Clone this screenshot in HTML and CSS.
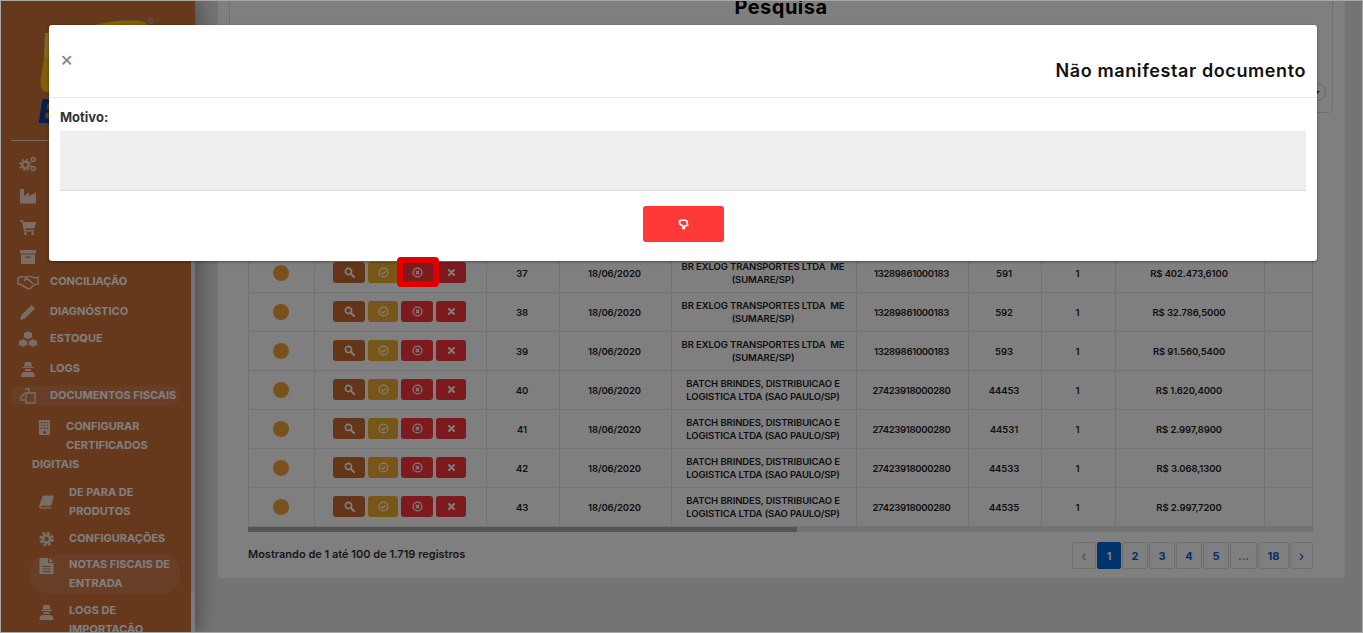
FILE: index.html
```html
<!DOCTYPE html>
<html>

<head>
    <meta charset="utf-8">
    <title>Notas fiscais de entrada</title>
    <link rel="stylesheet" href="styles.css">
</head>

<body>
    <svg class="icon-defs" xmlns="http://www.w3.org/2000/svg">
        <symbol id="i-search" viewBox="0 0 16 16"><circle cx="6.5" cy="6.5" r="4.5" fill="none" stroke="currentColor" stroke-width="2.4"/><path d="M10 10l4.5 4.5" stroke="currentColor" stroke-width="3" stroke-linecap="round"/></symbol>
        <symbol id="i-check" viewBox="0 0 16 16"><circle cx="8" cy="8" r="6.5" fill="none" stroke="currentColor" stroke-width="1.8"/><path d="M4.8 8l2.4 2.4 4-4" fill="none" stroke="currentColor" stroke-width="1.8"/></symbol>
        <symbol id="i-cancel" viewBox="0 0 16 16"><circle cx="8" cy="8" r="6.5" fill="none" stroke="currentColor" stroke-width="1.8"/><path d="M5.5 5.5l5 5M10.5 5.5l-5 5" stroke="currentColor" stroke-width="2"/></symbol>
        <symbol id="i-times" viewBox="0 0 16 16"><path d="M3.5 3.5l9 9M12.5 3.5l-9 9" stroke="currentColor" stroke-width="3.6" stroke-linecap="round"/></symbol>
        <symbol id="i-gears" viewBox="0 0 20 18"><circle cx="7" cy="10" r="3.6" fill="none" stroke="currentColor" stroke-width="2.6"/><circle cx="7" cy="10" r="6" fill="none" stroke="currentColor" stroke-width="2" stroke-dasharray="2.4 2.3"/><circle cx="16" cy="4" r="2.2" fill="none" stroke="currentColor" stroke-width="1.8"/><circle cx="16" cy="14" r="2.2" fill="none" stroke="currentColor" stroke-width="1.8"/></symbol>
        <symbol id="i-industry" viewBox="0 0 16 16"><path d="M0 1h4v7l5-3.500V8l7-3.500V15.500H0z" fill="currentColor"/></symbol>
        <symbol id="i-cart" viewBox="0 0 16 16"><path d="M0 1h3l.6 2H16l-1.500 6.500H5l.4 1.500H14v1.500H4L2 2.500H0z" fill="currentColor"/><circle cx="5.500" cy="14.500" r="1.500" fill="currentColor"/><circle cx="12.500" cy="14.500" r="1.500" fill="currentColor"/></symbol>
        <symbol id="i-archive" viewBox="0 0 16 16"><path d="M0 1h16v3.500H0zM1 5.500h14V15H1zM5.500 7.500v1.200h5V7.500z" fill="currentColor" fill-rule="evenodd"/></symbol>
        <symbol id="i-handshake" viewBox="0 0 22 14"><path d="M1 3l4-1.500 4 1 2-1 3 0 4 1.500 3-1v7l-3 .5-5 4-2 .5-3-2-4-2.500-3-.5zM7 6l2-2.500 3 1.500 4 4" fill="none" stroke="currentColor" stroke-width="1.600"/></symbol>
        <symbol id="i-pencil" viewBox="0 0 16 16"><path d="M11.500 1l3.500 3.500L5 14.500 0 16l1.500-5z" fill="currentColor"/></symbol>
        <symbol id="i-cubes" viewBox="0 0 20 16"><path d="M10 0l4.500 2v4.500L10 8.500 5.500 6.500V2zM5 8l4.500 2v4L5 16 .5 14v-4zM15 8l4.500 2v4L15 16l-4.500-2v-4z" fill="currentColor" stroke="#cc7038" stroke-width=".6"/></symbol>
        <symbol id="i-secret" viewBox="0 0 14 16"><path d="M4 1h6l1 4.500H3zM1.500 6h11v1h-11zM4 8h6v2H4zM0 16c0-3 1-5 4-5h6c3 0 4 2 4 5z" fill="currentColor"/></symbol>
        <symbol id="i-copy" viewBox="0 0 16 16"><path d="M5 1h4v4H5L1 9v3h4M6 5h9v10H6z" fill="none" stroke="currentColor" stroke-width="1.300"/></symbol>
        <symbol id="i-building" viewBox="0 0 12 16"><path d="M0 0h12v16H0zM2 2v1.500h1.500V2zM5 2v1.500h2V2zM8.500 2v1.500H10V2zM2 5v1.500h1.500V5zM5 5v1.500h2V5zM8.500 5v1.500H10V5zM2 8v1.500h1.500V8zM5 8v1.500h2V8zM8.500 8v1.500H10V8zM4.500 12v2.500h3V12z" fill="currentColor" fill-rule="evenodd"/></symbol>
        <symbol id="i-book" viewBox="0 0 16 14"><path d="M4 0h12l-3 11H2.500c-.8 0-1 1.500 0 1.500H13V14H2c-2 0-2-2-1.500-3.500z" fill="currentColor"/></symbol>
        <symbol id="i-cog" viewBox="0 0 16 16"><circle cx="8" cy="8" r="3.800" fill="none" stroke="currentColor" stroke-width="3"/><circle cx="8" cy="8" r="6.500" fill="none" stroke="currentColor" stroke-width="2.600" stroke-dasharray="3 2.100"/></symbol>
        <symbol id="i-file" viewBox="0 0 14 16"><path d="M0 0h8.500v5H14v11H0zM9.500 0L14 4H9.500zM3 8v1h8V8zM3 10.500v1h8v-1zM3 13v1h8v-1z" fill="currentColor" fill-rule="evenodd"/></symbol>
        <symbol id="i-thumb" viewBox="0 0 16 16"><path d="M2 3Q8 0 13 3L14 9 10 10 9 14H7.500L6.500 9.500 3 8z" fill="none" stroke="currentColor" stroke-width="2.400" stroke-linejoin="round"/></symbol>
    </svg>

    <div class="page">
        <aside class="sidebar">
            <div class="sidebar-inner">
                <div class="logo">
                    <svg class="logo-mark" viewBox="0 0 125 76"><path d="M9 9L55 6C70 2 90 0 105 3c14 20 10 50 5 70H8C0 73 0 66 1 58z" fill="#ffc20e"/><path d="M5 14h6l-1 24H4z" fill="#ffd54a"/></svg>
                    <span class="logo-reg">®</span>
                    <span class="logo-name">B</span>
                </div>
                <ul class="menu">
                    <li class="menu-item row-32"><svg class="menu-icon icon-wide"><use href="#i-gears"/></svg>CADASTROS</li>
                    <li class="menu-item row-31"><svg class="menu-icon"><use href="#i-industry"/></svg>EMPRESAS</li>
                    <li class="menu-item row-30"><svg class="menu-icon"><use href="#i-cart"/></svg>COMPRAS</li>
                    <li class="menu-item row-25"><svg class="menu-icon"><use href="#i-archive"/></svg>ARQUIVOS</li>
                    <li class="menu-item row-30"><svg class="menu-icon icon-wide"><use href="#i-handshake"/></svg>CONCILIAÇÃO</li>
                    <li class="menu-item row-27"><svg class="menu-icon"><use href="#i-pencil"/></svg>DIAGNÓSTICO</li>
                    <li class="menu-item row-30"><svg class="menu-icon icon-wide"><use href="#i-cubes"/></svg>ESTOQUE</li>
                    <li class="menu-item row-27"><svg class="menu-icon"><use href="#i-secret"/></svg>LOGS</li>
                    <li class="menu-item menu-open"><svg class="menu-icon"><use href="#i-copy"/></svg>DOCUMENTOS FISCAIS</li>
                </ul>
                <ul class="submenu">
                    <li class="sub-float"><svg class="sub-icon-float"><use href="#i-building"/></svg>CONFIGURAR CERTIFICADOS DIGITAIS</li>
                    <li class="sub-item"><svg class="sub-icon"><use href="#i-book"/></svg><span>DE PARA DE PRODUTOS</span></li>
                    <li class="sub-item sub-tight"><svg class="sub-icon"><use href="#i-cog"/></svg><span>CONFIGURAÇÕES</span></li>
                    <li class="sub-item sub-active"><svg class="sub-icon sub-icon-top"><use href="#i-file"/></svg><span>NOTAS FISCAIS DE ENTRADA</span></li>
                    <li class="sub-item"><svg class="sub-icon sub-icon-top"><use href="#i-secret"/></svg><span>LOGS DE IMPORTAÇÃO</span></li>
                </ul>
            </div>
            <div class="sidebar-scroll">
                <div class="scroll-top"></div>
                <div class="scroll-thumb"></div>
            </div>
        </aside>

        <main class="main">
            <section class="card">
                <div class="search-box">
                    <h2 class="search-title">Pesquisa</h2>
                    <div class="search-row"><span class="select-knob"></span></div>
                </div>

                <div class="table-area">
                    <table class="grid">
                        <colgroup>
                            <col class="c-status"><col class="c-actions"><col class="c-id"><col class="c-date"><col class="c-name"><col class="c-cnpj"><col class="c-num"><col class="c-serie"><col class="c-value"><col class="c-end">
                        </colgroup>
                        <tbody>
                            <tr>
                                <td><span class="dot"></span></td>
                                <td><div class="actions"><span class="btn btn-search"><svg><use href="#i-search"/></svg></span><span class="btn btn-check"><svg><use href="#i-check"/></svg></span><span class="btn btn-cancel"><svg><use href="#i-cancel"/></svg></span><span class="btn btn-times"><svg><use href="#i-times"/></svg></span></div></td>
                                <td>37</td><td>18/06/2020</td><td>BR EXLOG TRANSPORTES LTDA&nbsp; ME (SUMARE/SP)</td><td>13289861000183</td><td>591</td><td>1</td><td>R$ 402.473,6100</td><td></td>
                            </tr>
                            <tr>
                                <td><span class="dot"></span></td>
                                <td><div class="actions"><span class="btn btn-search"><svg><use href="#i-search"/></svg></span><span class="btn btn-check"><svg><use href="#i-check"/></svg></span><span class="btn btn-cancel"><svg><use href="#i-cancel"/></svg></span><span class="btn btn-times"><svg><use href="#i-times"/></svg></span></div></td>
                                <td>38</td><td>18/06/2020</td><td>BR EXLOG TRANSPORTES LTDA&nbsp; ME (SUMARE/SP)</td><td>13289861000183</td><td>592</td><td>1</td><td>R$ 32.786,5000</td><td></td>
                            </tr>
                            <tr>
                                <td><span class="dot"></span></td>
                                <td><div class="actions"><span class="btn btn-search"><svg><use href="#i-search"/></svg></span><span class="btn btn-check"><svg><use href="#i-check"/></svg></span><span class="btn btn-cancel"><svg><use href="#i-cancel"/></svg></span><span class="btn btn-times"><svg><use href="#i-times"/></svg></span></div></td>
                                <td>39</td><td>18/06/2020</td><td>BR EXLOG TRANSPORTES LTDA&nbsp; ME (SUMARE/SP)</td><td>13289861000183</td><td>593</td><td>1</td><td>R$ 91.560,5400</td><td></td>
                            </tr>
                            <tr>
                                <td><span class="dot"></span></td>
                                <td><div class="actions"><span class="btn btn-search"><svg><use href="#i-search"/></svg></span><span class="btn btn-check"><svg><use href="#i-check"/></svg></span><span class="btn btn-cancel"><svg><use href="#i-cancel"/></svg></span><span class="btn btn-times"><svg><use href="#i-times"/></svg></span></div></td>
                                <td>40</td><td>18/06/2020</td><td>BATCH BRINDES, DISTRIBUICAO E LOGISTICA LTDA (SAO PAULO/SP)</td><td>27423918000280</td><td>44453</td><td>1</td><td>R$ 1.620,4000</td><td></td>
                            </tr>
                            <tr>
                                <td><span class="dot"></span></td>
                                <td><div class="actions"><span class="btn btn-search"><svg><use href="#i-search"/></svg></span><span class="btn btn-check"><svg><use href="#i-check"/></svg></span><span class="btn btn-cancel"><svg><use href="#i-cancel"/></svg></span><span class="btn btn-times"><svg><use href="#i-times"/></svg></span></div></td>
                                <td>41</td><td>18/06/2020</td><td>BATCH BRINDES, DISTRIBUICAO E LOGISTICA LTDA (SAO PAULO/SP)</td><td>27423918000280</td><td>44531</td><td>1</td><td>R$ 2.997,8900</td><td></td>
                            </tr>
                            <tr>
                                <td><span class="dot"></span></td>
                                <td><div class="actions"><span class="btn btn-search"><svg><use href="#i-search"/></svg></span><span class="btn btn-check"><svg><use href="#i-check"/></svg></span><span class="btn btn-cancel"><svg><use href="#i-cancel"/></svg></span><span class="btn btn-times"><svg><use href="#i-times"/></svg></span></div></td>
                                <td>42</td><td>18/06/2020</td><td>BATCH BRINDES, DISTRIBUICAO E LOGISTICA LTDA (SAO PAULO/SP)</td><td>27423918000280</td><td>44533</td><td>1</td><td>R$ 3.068,1300</td><td></td>
                            </tr>
                            <tr>
                                <td><span class="dot"></span></td>
                                <td><div class="actions"><span class="btn btn-search"><svg><use href="#i-search"/></svg></span><span class="btn btn-check"><svg><use href="#i-check"/></svg></span><span class="btn btn-cancel"><svg><use href="#i-cancel"/></svg></span><span class="btn btn-times"><svg><use href="#i-times"/></svg></span></div></td>
                                <td>43</td><td>18/06/2020</td><td>BATCH BRINDES, DISTRIBUICAO E LOGISTICA LTDA (SAO PAULO/SP)</td><td>27423918000280</td><td>44535</td><td>1</td><td>R$ 2.997,7200</td><td></td>
                            </tr>
                        </tbody>
                    </table>
                    <div class="table-scroll"><div class="table-thumb"></div></div>

                    <div class="table-footer">
                        <span class="records">Mostrando de 1 até 100 de 1.719 registros</span>
                        <nav class="pager">
                            <a class="page-link page-prev">‹</a>
                            <a class="page-link page-current">1</a>
                            <a class="page-link">2</a>
                            <a class="page-link">3</a>
                            <a class="page-link">4</a>
                            <a class="page-link">5</a>
                            <a class="page-link page-gap">...</a>
                            <a class="page-link page-last">18</a>
                            <a class="page-link page-next">›</a>
                        </nav>
                    </div>
                </div>
            </section>
        </main>

        <div class="backdrop"></div>

        <div class="modal">
            <div class="modal-header">
                <span class="modal-close">×</span>
                <h4 class="modal-title">Não manifestar documento</h4>
            </div>
            <div class="modal-body">
                <label class="modal-label">Motivo:</label>
                <div class="modal-textarea"></div>
            </div>
            <div class="modal-footer">
                <button class="btn-refuse"><svg><use href="#i-thumb"/></svg></button>
            </div>
        </div>

        <div class="highlight"></div>
    </div>
</body>

</html>
```

FILE: styles.css
```css
* {
    box-sizing: border-box;
}

html,
body {
    margin: 0;
    padding: 0;
}

body {
    font-family: Inter, "Liberation Sans", sans-serif;
    background-color: #e8e8e8;
}

ul {
    margin: 0;
    padding: 0;
    list-style: none;
}

.icon-defs {
    width: 0;
    height: 0;
    display: block;
}

.page {
    position: relative;
    display: flex;
    width: 1363px;
    height: 633px;
    overflow: hidden;
}

.page::after {
    content: "";
    position: absolute;
    inset: 0;
    border: 1px solid #a8a8a8;
    pointer-events: none;
    z-index: 9;
}

/* sidebar */
.sidebar {
    display: flex;
    flex: 0 0 195px;
    box-shadow: 4px 0 18px rgba(0, 0, 0, 0.35);
    z-index: 1;
}

.sidebar-inner {
    width: 191px;
    background-color: #cc7038;
    color: #fff;
    font-size: 11px;
    font-weight: 700;
    line-height: 19px;
}

.sidebar-scroll {
    display: flex;
    flex-direction: column;
    justify-content: space-between;
    width: 4px;
}

.scroll-top {
    height: 120px;
    background-color: #cc7038;
}

.scroll-thumb {
    height: 41px;
    background-color: #fff;
    opacity: 0.6;
}

.logo {
    position: relative;
    height: 141px;
    margin: 0 0 0 11px;
    border-bottom: 1px solid #ddd;
}

.logo-mark {
    position: absolute;
    left: 29px;
    top: 19px;
    width: 125px;
    height: 76px;
}

.logo-reg {
    position: absolute;
    left: 136px;
    top: 13px;
    font-size: 11px;
    color: #aaa;
}

.logo-name {
    position: absolute;
    left: 27px;
    top: 96px;
    font-size: 32px;
    line-height: 32px;
    font-weight: 800;
    font-style: italic;
    color: #0b3f9e;
}

.menu {
    padding-top: 13px;
}

.menu-item {
    display: flex;
    align-items: flex-start;
    padding-left: 19px;
}

.row-32 { height: 32px; }
.row-31 { height: 31px; }
.row-30 { height: 30px; }
.row-27 { height: 27px; }
.row-25 { height: 25px; }

.menu-icon {
    flex: 0 0 auto;
    width: 18px;
    height: 16px;
    margin: 2px 13px 0 0;
    color: #fff;
    opacity: 0.75;
}

.icon-wide {
    width: 22px;
    margin-left: -2px;
    margin-right: 11px;
}

.menu-open {
    height: 19px;
    margin: 0 11px;
    padding-left: 8px;
    border-radius: 10px;
    background-color: rgba(255, 255, 255, 0.1);
}

.submenu {
    padding-top: 12px;
}

.sub-float {
    padding-left: 32px;
    margin-bottom: 9px;
}

.sub-icon-float {
    float: left;
    width: 13px;
    height: 15px;
    margin: 3px 15px 20px 6px;
    color: #fff;
    opacity: 0.75;
}

.sub-item {
    display: flex;
    align-items: center;
    margin-left: 30px;
    width: 150px;
    padding: 0 0 8px 9px;
}

.sub-item span {
    width: 115px;
}

.sub-tight {
    padding-bottom: 7px;
}

.sub-active {
    padding: 0 0 0 9px;
    margin-bottom: 8px;
    border-radius: 16px;
    background-color: rgba(255, 255, 255, 0.1);
}

.sub-icon {
    flex: 0 0 auto;
    width: 15px;
    height: 16px;
    margin-right: 15px;
    color: #fff;
    opacity: 0.75;
}

.sub-icon-top {
    align-self: flex-start;
    margin-top: 3px;
}

/* page */
.main {
    flex: 1;
    padding: 0 19px 0 23px;
}

.card {
    height: 599px;
    padding: 0 12px 0 11px;
    background-color: #fff;
    border-radius: 0 0 3px 3px;
}

.search-box {
    display: flex;
    flex-direction: column;
    height: 134px;
    margin-top: -21px;
    border: 1px solid #ddd;
    border-radius: 5px;
}

.search-title {
    margin: 0;
    padding-top: 15px;
    text-align: center;
    font-size: 20px;
    line-height: 24px;
    font-weight: 700;
    letter-spacing: 0.5px;
    color: #000;
}

.search-row {
    display: flex;
    justify-content: flex-end;
    padding: 64px 6px 0 0;
}

.select-knob {
    display: flex;
    align-items: center;
    justify-content: center;
    width: 18px;
    height: 18px;
    border: 1px solid #ccc;
    border-radius: 50%;
}

.select-knob::after {
    content: "";
    border-top: 3px solid #333;
    border-left: 3px solid transparent;
    border-right: 3px solid transparent;
}

.table-area {
    margin: 0 20px 0 19px;
    padding-top: 140px;
}

.grid {
    width: 1064px;
    border-collapse: collapse;
    table-layout: fixed;
    font-size: 9.5px;
    font-weight: 600;
    line-height: 13px;
    letter-spacing: -0.1px;
    color: #222;
    text-align: center;
}

.grid td {
    height: 39px;
    padding: 0 9px 0 7px;
    border: 1px solid #e4e4e4;
}

.grid td:nth-child(6) {
    letter-spacing: -0.3px;
}

.c-status { width: 66px; }
.c-actions { width: 172px; }
.c-id { width: 73px; }
.c-date { width: 112px; }
.c-name { width: 185px; }
.c-cnpj { width: 112px; }
.c-num { width: 73px; }
.c-serie { width: 74px; }
.c-value { width: 149px; }
.c-end { width: 48px; }

.dot {
    display: block;
    width: 16px;
    height: 16px;
    margin: -1px auto 0;
    border-radius: 50%;
    background-color: #f0a33c;
}

.actions {
    display: flex;
    justify-content: center;
    gap: 3px;
    margin-top: -1px;
}

.btn {
    display: flex;
    align-items: center;
    justify-content: center;
    width: 32px;
    height: 21px;
    border-radius: 3px;
    color: #fff;
}

.btn svg {
    width: 11px;
    height: 11px;
}

.btn-search { background-color: #c96b30; }
.btn-check { background-color: #f0ab30; width: 30px; }
.btn-cancel { background-color: #fb343c; }
.btn-times { background-color: #fb343c; width: 30px; }
.btn-times svg { width: 9px; height: 9px; }

.table-scroll {
    height: 5px;
    background-color: #e6e6e6;
}

.table-thumb {
    width: 549px;
    height: 5px;
    background-color: #aaa;
}

.table-footer {
    display: flex;
    justify-content: space-between;
    align-items: center;
    padding-top: 10px;
}

.records {
    margin-bottom: 4px;
    font-size: 11px;
    font-weight: 600;
    color: #333;
}

.pager {
    display: flex;
    gap: 1px;
}

.page-link {
    display: flex;
    align-items: center;
    justify-content: center;
    width: 26px;
    height: 27px;
    border: 1px solid #ddd;
    border-radius: 2px;
    font-size: 11px;
    font-weight: 700;
    color: #0a5ed7;
}

.page-prev { width: 24px; color: #999; font-size: 14px; font-weight: 400; }
.page-current { width: 24px; background-color: #0067d6; border-color: #0067d6; color: #fff; }
.page-gap { width: 27px; color: #888; }
.page-last { width: 31px; }
.page-next { width: 23px; font-size: 14px; font-weight: 400; }

/* modal */
.backdrop {
    position: absolute;
    inset: 0;
    background-color: #000;
    opacity: 0.5;
    z-index: 2;
}

.modal {
    position: absolute;
    left: 49px;
    top: 25px;
    width: 1268px;
    height: 236px;
    background-color: #fff;
    border-radius: 3px;
    box-shadow: 0 1px 3px rgba(0, 0, 0, 0.4);
    z-index: 3;
}

.modal-header {
    height: 73px;
    padding: 24px 11px 0 11px;
    border-bottom: 1px solid #e5e5e5;
}

.modal-close {
    display: block;
    height: 11px;
    font-size: 20px;
    line-height: 20px;
    font-weight: 500;
    color: #888;
}

.modal-title {
    margin: 0;
    text-align: right;
    font-size: 18px;
    line-height: 22px;
    font-weight: 600;
    letter-spacing: 0.6px;
    color: #111;
}

.modal-body {
    padding: 12px 11px 0 11px;
}

.modal-label {
    display: block;
    font-size: 13px;
    line-height: 15px;
    font-weight: 700;
    color: #333;
}

.modal-textarea {
    height: 60px;
    margin-top: 6px;
    background-color: #eee;
    border-bottom: 1px solid #ddd;
}

.modal-footer {
    display: flex;
    justify-content: center;
    padding: 15px 0 0 1px;
}

.btn-refuse {
    display: flex;
    align-items: center;
    justify-content: center;
    width: 81px;
    height: 36px;
    border: 0;
    border-radius: 3px;
    background-color: #ff3838;
    color: #fff;
}

.btn-refuse svg {
    width: 11px;
    height: 11px;
}

.highlight {
    position: absolute;
    left: 397px;
    top: 257px;
    width: 42px;
    height: 30px;
    border: 6px solid #e00000;
    border-radius: 4px;
    z-index: 4;
}
```
